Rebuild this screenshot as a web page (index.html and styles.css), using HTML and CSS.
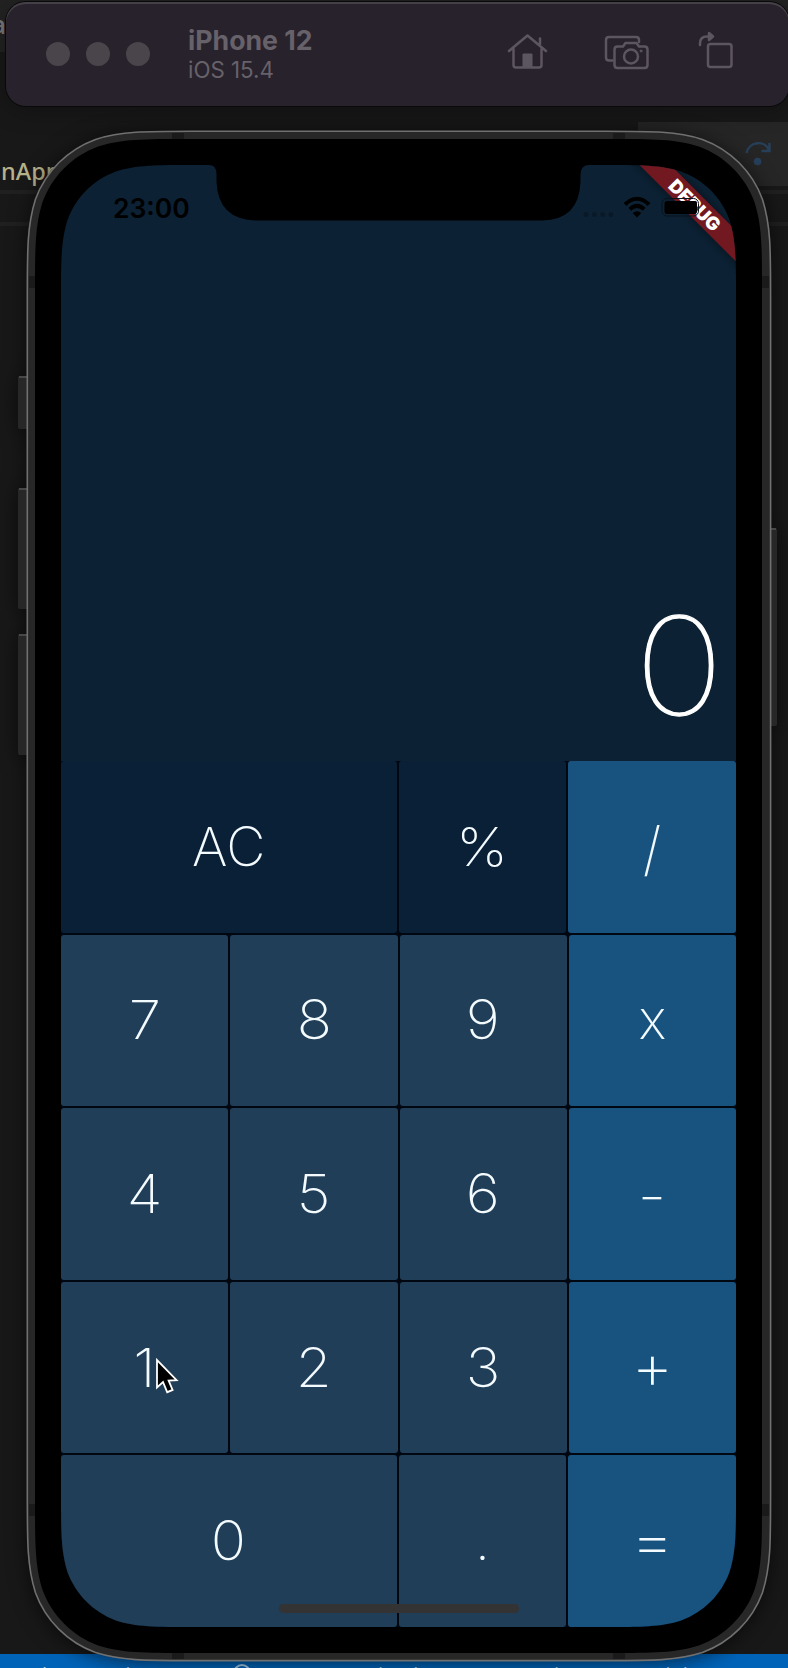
FILE: index.html
```html
<!DOCTYPE html>
<html lang="en">
<head>
<meta charset="utf-8">
<title>Calculator</title>
<link rel="stylesheet" href="styles.css">
</head>
<body>
<div class="desktop">
  <div class="editor-tabs"></div>
  <div class="editor-tools"></div>
  <span class="tab-text">a</span>
  <span class="code-text">nApp</span>
  <div class="rule rule-one"></div>
  <div class="rule rule-two"></div>
  <svg class="step-icon" width="26" height="26" viewBox="0 0 26 26"><path d="M1.500 12C4 0 20-1 24 9M24.500 2v8h-8" fill="none" stroke="#27405a" stroke-width="2.400"/><circle cx="12.500" cy="20.500" r="3.800" fill="#27405a"/></svg>
  <div class="status-bar"><span>* 3 EnTodos</span><i></i><span>Dart DevTools&nbsp; Flutter 2.10.5 (iPhone 12 mobile)</span></div>

  <header class="toolbar">
    <div class="dots"><i></i><i></i><i></i></div>
    <div class="heading"><div class="title">iPhone 12</div><div class="sub">iOS 15.4</div></div>
    <svg class="tools" width="230" height="44" viewBox="0 0 230 44" fill="none" stroke="#5c5660" stroke-width="2.500" stroke-linecap="round" stroke-linejoin="round">
      <path d="M2 21 20.500 5.500 39 21M6.500 19v16q0 2.500 2.500 2.500h23q2.500 0 2.500-2.500V19M33 14V8.500"/>
      <path d="M16 37V24h9v13z" fill="#5c5660" stroke-width="1"/>
      <path d="M105.500 30.500H102q-3 0-3-3V10q0-3 3-3h27q3 0 3 3v2"/>
      <path d="M110.500 16.500h5.500l2.500-3.500h11l2.500 3.500h5.500q3 0 3 3V35q0 3-3 3h-27q-3 0-3-3V19.500q0-3 3-3z"/>
      <circle cx="124" cy="26.500" r="7"/><circle cx="134" cy="21" r="1" fill="#5c5660" stroke-width="1"/>
      <rect x="201" y="14" width="23.500" height="23" rx="2.500"/>
      <path d="M193 15v-1.500Q193 6.500 200 6.500h2"/><path d="M202 3v7l4-3.500z" fill="#5c5660"/>
    </svg>
  </header>

  <div class="device">
    <svg class="shell" width="788" height="1540" viewBox="0 0 788 1540">
      <g fill="#272727"><rect x="18" y="249" width="14" height="53" rx="2"/><rect x="18" y="361" width="14" height="121" rx="2"/><rect x="18" y="507" width="14" height="121" rx="2"/><rect x="765" y="401" width="12" height="198" rx="2"/></g>
      <path d="M19 250h8M19 362h8M19 508h8M771 402h5" stroke="#484848" stroke-width="2"/>
      <g id="frame"></g>
      <g fill="#1a1a1a"><path d="M172 6h12v6h-12zM613 6h12v6h-12zM172 1526h12v6h-12zM613 1526h12v6h-12zM29 149h6v12h-6zM762 149h7v12h-7zM29 1377h6v12h-6zM762 1377h7v12h-7z"/></g>
    </svg>
    <main class="screen">
      <div class="status">
        <span class="clock">23:00</span>
        <div class="banner"><b>DEBUG</b></div>
        <svg class="signals" width="130" height="30" viewBox="0 0 130 30">
          <g fill="#0a1927"><circle cx="6" cy="21.500" r="2.400"/><circle cx="14.300" cy="21.500" r="2.400"/><circle cx="22.700" cy="21.500" r="2.400"/><circle cx="31" cy="21.500" r="2.400"/></g>
          <g fill="none" stroke="#000" stroke-width="4"><path d="M45 11.500Q57 0 69 11.500"/><path d="M49.800 16.300Q57 9.300 64.200 16.300"/></g><path d="M52.700 20q4.300-3.600 8.600 0L57 24.500z"/>
          <rect x="82" y="5.500" width="36.500" height="17.500" rx="5" fill="none" stroke="#08131c"/><rect x="84.500" y="8" width="32.500" height="13" rx="2.800"/>
        </svg>
      </div>
      <div class="display"><span class="value">0</span></div>
      <div class="pad">
        <div class="row"><div class="key dark wide">AC</div><div class="key dark"><span class="digit">%</span></div><div class="key op"><span class="slash">/</span></div></div>
        <div class="row"><div class="key"><span class="digit">7</span></div><div class="key"><span class="digit">8</span></div><div class="key"><span class="digit">9</span></div><div class="key op">x</div></div>
        <div class="row"><div class="key"><span class="digit">4</span></div><div class="key"><span class="digit">5</span></div><div class="key"><span class="digit">6</span></div><div class="key op"><span class="minus">-</span></div></div>
        <div class="row"><div class="key"><span class="digit">1</span></div><div class="key"><span class="digit">2</span></div><div class="key"><span class="digit">3</span></div><div class="key op"><span class="sign">+</span></div></div>
        <div class="row"><div class="key wide"><span class="digit">0</span></div><div class="key">.</div><div class="key op"><span class="equals">=</span></div></div>
      </div>
      <svg class="notch" width="390" height="56" viewBox="0 0 390 56"><path d="M0 0H8Q15.500 0 15.500 9V17Q17 55 56 55.500H341Q378 55 379.500 17V9Q380 0 388 0z"/></svg>
      <div class="home-bar"></div>
    </main>
  </div>
  <svg class="cursor" width="24" height="37" viewBox="0 0 24 37"><path d="M1 2V29.500l6-5.500 4.200 10.200 5.400-2.300-4-9.400 8-.400z" fill="#000" stroke="#fff" stroke-width="1.800"/></svg>
</div>
<script src="frame.js"></script>
</body>
</html>
```
FILE: styles.css
```css
* { box-sizing: border-box; }
body { margin: 0; background: #181818; font-family: Inter, Roboto, sans-serif; }
.desktop { position: relative; width: 788px; height: 1668px; overflow: hidden; background: #181818; }
.editor-tabs { position: absolute; inset: 0 0 auto; height: 52px; background: #222; }
.editor-tools { position: absolute; left: 638px; top: 122px; width: 150px; height: 64px; background: #262626; }
.tab-text { position: absolute; left: -9px; top: 9px; font: 600 26px/30px "Open Sans", sans-serif; color: #777; }
.code-text { position: absolute; left: 1px; top: 156px; font: 500 23.500px/30px "Noto Sans", sans-serif; color: #b7b28c; }
.rule { position: absolute; left: 0; right: 0; height: 4px; background: #202020; }
.rule-one { top: 190px; }
.rule-two { top: 222px; }
.step-icon { position: absolute; left: 745px; top: 141px; }
.status-bar { position: absolute; inset: 1654px 0 auto; height: 40px; padding: 8px 0 0 39px; display: flex; gap: 10px; background: #0063b8; color: #a9cbe6; font: 20px/26px "Open Sans", sans-serif; white-space: nowrap; }
.status-bar i { width: 18px; height: 18px; margin: 2px 0 0 71px; border: 2px solid #a9cbe6; border-radius: 50%; }

.toolbar { position: absolute; left: 6px; top: 2px; width: 783px; height: 104px; border-radius: 20px; background: #28222c; box-shadow: 0 0 0 1px #090909, inset 0 2px 0 #454047, 0 4px 24px rgba(0,0,0,.3); display: flex; padding: 0 0 0 40px; }
.dots { display: flex; gap: 16px; margin-top: 40px; }
.dots i { width: 24px; height: 24px; border-radius: 50%; background: #49454b; }
.heading { margin: 22px 0 0 38px; width: 321px; color: #67616a; }
.title { font-size: 26.700px; line-height: 32px; font-weight: 700; white-space: nowrap; }
.sub { font-size: 22.300px; line-height: 28px; }
.tools { margin: 28px 0 0 -2px; flex: none; }

.device { position: absolute; left: 0; top: 127px; width: 788px; height: 1540px; padding: 38px 52px 0 61px; }
.shell { position: absolute; left: 0; top: 0; filter: drop-shadow(0 2px 10px rgba(0,0,0,.6)); }
.screen { position: relative; width: 675px; height: 1462px; background: #0c2133; display: flex; flex-direction: column; overflow: hidden; }
.status { position: relative; height: 100px; }
.clock { position: absolute; left: 52px; top: 27px; font-size: 26.500px; line-height: 32px; font-weight: 600; color: #000; }
.banner { position: absolute; left: 534px; top: 29px; width: 200px; height: 22px; transform: rotate(45deg); background: #711820; box-shadow: 0 0 8px rgba(0,0,0,.45); color: #fff; text-align: center; font-size: 18.500px; line-height: 22px; }
.banner b { font-weight: 900; }
.signals { position: absolute; left: 519px; top: 28px; }
.display { height: 496px; padding: 321px 17px 0 0; text-align: right; color: #fff; font-size: 136px; line-height: 160px; font-weight: 100; }
.value { display: inline-block; transform: scaleX(1.11); -webkit-text-stroke: 1.2px #fff; }
.pad { flex: 1; display: flex; flex-direction: column; gap: 2px; background: #000710; }
.row { flex: 1; display: flex; gap: 2px; }
.key { flex: 1 1 0; display: flex; align-items: center; justify-content: center; border-radius: 3px; background: #203e57; color: #f4fbff; font-size: 54px; line-height: 60px; font-weight: 200; }
.digit { transform: scaleX(1.08); }
.slash { transform: translateY(2px) scaleY(1.09); }
.minus { transform: translateY(2px) scaleX(1.2); }
.sign { transform: translateY(-2px) scale(1.2); }
.equals { transform: scale(1.28, 1.1); }
.wide { flex-grow: 2; }
.dark { background: #0a2037; }
.op { background: #18537f; }
.notch { position: absolute; left: 140px; top: 0; }
.home-bar { position: absolute; left: 218px; top: 1439px; width: 240px; height: 9px; border-radius: 5px; background: #333; }
.cursor { position: absolute; left: 156px; top: 1358px; }
```
FILE: frame.js
```js
// Builds a rectangle path with continuous-curvature corners.
function smoothRect(x, y, w, h, r) {
  const a = 1.52866 * r, b = 1.08849 * r, c = 0.86841 * r, d = 0.63149 * r;
  const e = 0.07491 * r, f = 0.37282 * r, g = 0.16906 * r;
  const X = x + w, Y = y + h;
  return `M${x + a} ${y}H${X - a}C${X - b} ${y} ${X - c} ${y} ${X - d} ${y + e}` +
    `C${X - f} ${y + g} ${X - g} ${y + f} ${X - e} ${y + d}C${X} ${y + c} ${X} ${y + b} ${X} ${y + a}` +
    `V${Y - a}C${X} ${Y - b} ${X} ${Y - c} ${X - e} ${Y - d}C${X - g} ${Y - f} ${X - f} ${Y - g} ${X - d} ${Y - e}` +
    `C${X - c} ${Y} ${X - b} ${Y} ${X - a} ${Y}H${x + a}C${x + b} ${Y} ${x + c} ${Y} ${x + d} ${Y - e}` +
    `C${x + f} ${Y - g} ${x + g} ${Y - f} ${x + e} ${Y - d}C${x} ${Y - c} ${x} ${Y - b} ${x} ${Y - a}` +
    `V${y + a}C${x} ${y + b} ${x} ${y + c} ${x + e} ${y + d}C${x + g} ${y + f} ${x + f} ${y + g} ${x + d} ${y + e}` +
    `C${x + c} ${y} ${x + b} ${y} ${x + a} ${y}Z`;
}
document.getElementById('frame').innerHTML =
  `<path d="${smoothRect(27.3, 4.3, 743.3, 1529.3, 108)}" fill="#272727" stroke="#707070" stroke-width="1.6"/>` +
  `<path d="${smoothRect(35, 12, 727, 1514, 100)}" fill="#000"/>`;
document.querySelector('.screen').style.clipPath = `path("${smoothRect(0, 0, 675, 1462, 87)}")`;
```
